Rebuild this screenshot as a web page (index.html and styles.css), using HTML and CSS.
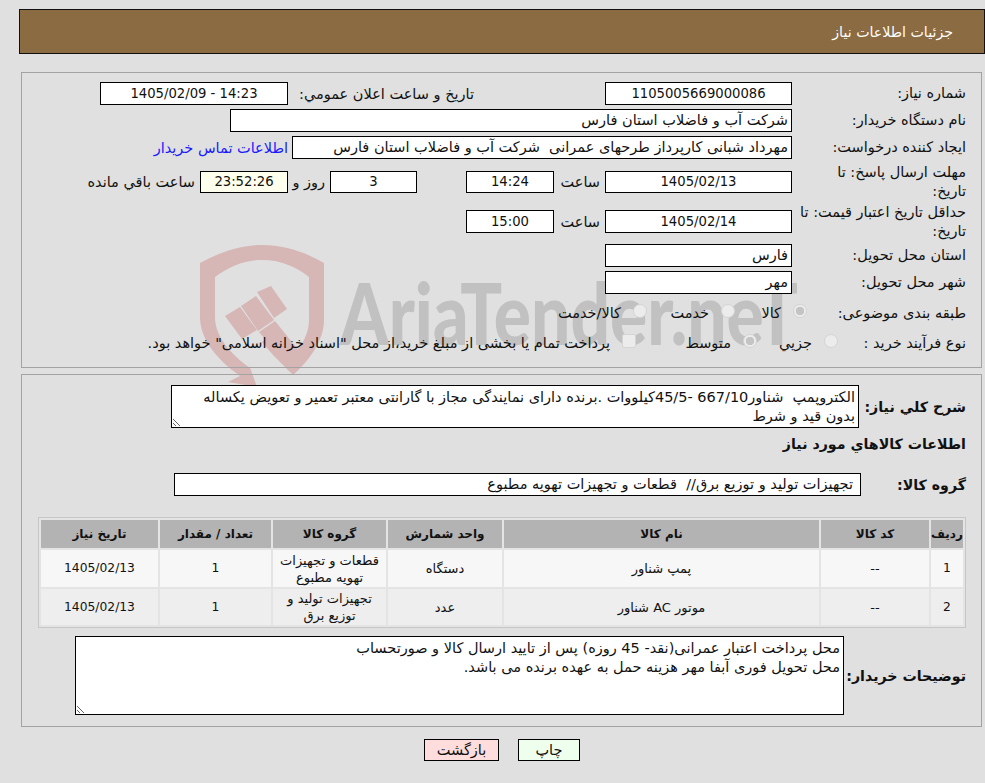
FILE: index.html
```html
<!DOCTYPE html>
<html lang="fa" dir="rtl">
<head>
<meta charset="utf-8">
<title>جزئیات اطلاعات نیاز</title>
<link rel="stylesheet" href="styles.css">
</head>
<body>
<svg class="watermark" width="985" height="783" viewBox="0 0 985 783" aria-hidden="true">
  <path class="wm-red" fill-rule="evenodd" d="M200 263C220 252 240 245 262 245C285 245 305 252 324 263L324 320C324 340 310 360 293 375L273 355L262 342L274 332L293 355C303 345 309 332 309 320L309 277C295 266 280 260 262 260C245 260 230 266 215 277L215 317C215 335 228 352 250 368L248 362L257 387L228 382L240 376C215 358 200 338 200 317Z"/>
  <path class="wm-red" d="M225 316L240 307L257 330L242 339Z"/>
  <path class="wm-red" d="M241 306L256 296L274 320L258 331Z"/>
  <path class="wm-red" d="M257 292L271 286L287 309L274 318Z"/>
  <path class="wm-red" d="M259 332L275 321L300 352L290 368Z"/>
  <text class="wm-text" x="340" y="345" textLength="458" lengthAdjust="spacingAndGlyphs">AriaTender.neT</text>
</svg>

<header class="title-bar"><h1 class="title">جزئیات اطلاعات نیاز</h1></header>

<section class="panel panel-info">
  <div class="row">
    <div class="lbl">شماره نیاز:</div>
    <div class="box w187 center num">1105005669000086</div>
    <div class="lbl-announce">تاریخ و ساعت اعلان عمومي:</div>
    <div class="box w188 center num" dir="ltr">1405/02/09 - 14:23</div>
  </div>
  <div class="row">
    <div class="lbl">نام دستگاه خریدار:</div>
    <div class="box w562">شرکت آب و فاضلاب استان فارس</div>
  </div>
  <div class="row">
    <div class="lbl">ایجاد کننده درخواست:</div>
    <div class="box w500">مهرداد شبانی کارپرداز طرحهای عمرانی&nbsp; شرکت آب و فاضلاب استان فارس</div>
    <a class="contact" href="#">اطلاعات تماس خریدار</a>
  </div>
  <div class="row row-tall first-tall">
    <div class="lbl">مهلت ارسال پاسخ: تا تاریخ:</div>
    <div class="box w187 center short num">1405/02/13</div>
    <div class="hour">ساعت</div>
    <div class="box w88 center short num">14:24</div>
    <div class="box w87 center short days num">3</div>
    <div class="day-word">روز و</div>
    <div class="box w88 center short ivory num">23:52:26</div>
    <div class="left-word">ساعت باقي مانده</div>
  </div>
  <div class="row row-tall second-tall">
    <div class="lbl">حداقل تاریخ اعتبار قیمت: تا تاریخ:</div>
    <div class="box w187 center num">1405/02/14</div>
    <div class="hour">ساعت</div>
    <div class="box w88 center num">15:00</div>
  </div>
  <div class="row">
    <div class="lbl">استان محل تحویل:</div>
    <div class="box w187">فارس</div>
  </div>
  <div class="row">
    <div class="lbl">شهر محل تحویل:</div>
    <div class="box w187">مهر</div>
  </div>
  <div class="row row-options">
    <div class="lbl lbl-subject">طبقه بندی موضوعی:</div>
    <label class="opt w72"><input class="radio" type="radio" name="subject" checked disabled>کالا</label>
    <label class="opt w88o"><input class="radio" type="radio" name="subject" disabled>خدمت</label>
    <label class="opt"><input class="radio" type="radio" name="subject" disabled>کالا/خدمت</label>
  </div>
  <div class="row row-options row-process">
    <div class="lbl lbl-process">نوع فرآیند خرید :</div>
    <label class="opt w81"><input class="radio" type="radio" name="process" disabled>جزیي</label>
    <label class="opt w121"><input class="radio" type="radio" name="process" checked disabled>متوسط</label>
    <label class="opt"><input class="check" type="checkbox" disabled>پرداخت تمام یا بخشی از مبلغ خرید،از محل "اسناد خزانه اسلامی" خواهد بود.</label>
  </div>
</section>

<section class="panel panel-goods">
  <div class="row row-desc">
    <div class="lbl-bold w107">شرح كلي نياز:</div>
    <textarea class="area area-desc" readonly>الکتروپمپ  شناور667/10 -45/5کیلووات .برنده دارای نمایندگی مجاز با گارانتی معتبر تعمیر و تعویض یکساله
بدون قید و شرط</textarea>
  </div>
  <h2 class="goods-title">اطلاعات كالاهاي مورد نياز</h2>
  <div class="row row-group">
    <div class="lbl-bold w105">گروه کالا:</div>
    <div class="box w687 group-box">تجهیزات تولید و توزیع برق//&nbsp; قطعات و تجهیزات تهویه مطبوع</div>
  </div>
  <table class="goods">
    <thead>
      <tr>
        <th class="c-row">ردیف</th><th class="c-code">کد کالا</th><th class="c-name">نام کالا</th><th class="c-unit">واحد شمارش</th><th class="c-group">گروه کالا</th><th class="c-qty">تعداد / مقدار</th><th class="c-date">تاریخ نیاز</th>
      </tr>
    </thead>
    <tbody>
      <tr class="r1">
        <td class="td-num">1</td><td>--</td><td>پمپ شناور</td><td>دستگاه</td><td>قطعات و تجهیزات تهویه مطبوع</td><td class="td-num">1</td><td class="td-num">1405/02/13</td>
      </tr>
      <tr class="r2">
        <td class="td-num">2</td><td>--</td><td>موتور AC شناور</td><td>عدد</td><td>تجهیزات تولید و توزیع برق</td><td class="td-num">1</td><td class="td-num">1405/02/13</td>
      </tr>
    </tbody>
  </table>
  <div class="row row-notes">
    <div class="lbl-bold w122">توضیحات خریدار:</div>
    <textarea class="area area-notes" readonly>محل پرداخت اعتبار عمرانی(نقد- 45 روزه) پس از تایید ارسال کالا و صورتحساب
محل تحویل فوری آبفا مهر هزینه حمل به عهده برنده می باشد.</textarea>
  </div>
</section>

<div class="actions">
  <button class="btn btn-print" type="button">چاپ</button>
  <button class="btn btn-back" type="button">بازگشت</button>
</div>
</body>
</html>
```

FILE: styles.css
```css
* { box-sizing: border-box; }
html { background: #e0e0e0; }
body {
  margin: 0;
  padding: 9px 0 0 19px;
  height: 783px;
  overflow: hidden;
  font-family: "DejaVu Sans", "Liberation Sans", sans-serif;
  font-size: 14.5px;
  color: #111;
}
.watermark { position: absolute; left: 0; top: 0; z-index: -1; direction: ltr; }
.wm-red { fill: #d7b6b6; }
.wm-text { font-family: "Lato", sans-serif; font-weight: 900; font-size: 86px; fill: #c1c1c1; direction: ltr; }

.title-bar {
  height: 45px;
  background: #8b6b41;
  border: 1px solid #111;
  display: flex;
  align-items: center;
  padding-right: 31px;
}
.title { margin: 0; font-size: 14.2px; font-weight: normal; color: #fff; }

.panel {
  width: 961px;
  margin-right: 3px;
  border: 1px solid #a3a3a3;
}
.panel-info { margin-top: 18px; height: 296px; padding: 9px 15px 0 0; }
.panel-goods { margin-top: 6px; height: 353px; padding: 10px 15px 0 0; }

.row { display: flex; align-items: center; margin-bottom: 4px; }
.row-tall { height: 37px; margin-bottom: 3px; }
.first-tall { margin-top: 4px; }
.second-tall { margin-bottom: 4px; }
.lbl { width: 166px; margin-left: 8px; line-height: 19px; flex: none; }
.lbl-announce { width: 312px; padding-right: 131px; flex: none; white-space: nowrap; margin-left: 5px; }

.box {
  height: 23px;
  line-height: 21px;
  background: #fff;
  border: 1px solid #000;
  padding: 0 3px;
  flex: none;
  white-space: nowrap;
  overflow: hidden;
}
.short { height: 22px; line-height: 20px; }
.num { font-size: 13.2px; }
.center { text-align: center; }
.ivory { background: #ffffee; }
.w187 { width: 187px; }
.w188 { width: 188px; }
.w562 { width: 562px; }
.w500 { width: 500px; }
.w88 { width: 88px; }
.w87 { width: 87px; }
.w687 { width: 687px; }

.contact { color: #1a1aff; text-decoration: none; margin-right: 4px; white-space: nowrap; }
.hour { width: 51px; padding-right: 5px; white-space: nowrap; flex: none; }
.days { margin-right: 49px; }
.day-word { width: 42px; padding-right: 5px; white-space: nowrap; flex: none; }
.left-word { margin-right: 5px; white-space: nowrap; }

.row-options { height: 24px; margin-bottom: 6px; margin-top: 7px; }
.row-process { margin-top: 0; }
.lbl-subject { width: 159px; margin-left: 0; }
.lbl-process { width: 128px; margin-left: 0; }
.opt { display: flex; align-items: center; white-space: nowrap; flex: none; }
.w72 { width: 72px; }
.w88o { width: 88px; }
.w81 { width: 81px; }
.w121 { width: 121px; }
.radio, .check {
  appearance: none;
  width: 14px;
  height: 14px;
  margin: -4px 0 0 12px;
  border: 1px solid #d4d4d4;
  background: #ececec;
  flex: none;
}
.radio { border-radius: 50%; }
.check { border-radius: 2px; }
.radio:checked { background: radial-gradient(circle, #c4c4c4 0 4px, #ececec 4.5px); }

.lbl-bold { font-weight: bold; font-size: 14.2px; flex: none; white-space: nowrap; }
.w107 { width: 107px; }
.w105 { width: 105px; }
.w122 { width: 122px; }
.area {
  display: block;
  background: #fff;
  border: 1px solid #000;
  border-radius: 0;
  font: inherit;
  color: inherit;
  line-height: 19px;
  padding: 2px 3px;
  margin: 0;
  outline: none;
  flex: none;
}
.area-desc { width: 688px; height: 43px; }
.area-notes { width: 769px; height: 79px; }
.row-desc { margin-bottom: 6px; }
.goods-title { margin: 0 0 19px; font-size: 14.2px; line-height: 20px; }
.row-group { margin-bottom: 21px; }
.group-box { padding-right: 7px; }

.goods {
  width: 927px;
  table-layout: fixed;
  border: 1px solid #c6c6c6;
  border-spacing: 2px;
  background: #e4e4e4;
  margin-bottom: 8px;
}
.goods th, .goods td { text-align: center; padding: 0; }
.goods th { height: 28px; background: #b3b3b3; font-weight: bold; font-size: 12px; }
.goods td { line-height: 17px; font-size: 13px; }
.goods .td-num { font-size: 12.3px; }
.r1 td { height: 37px; background: #f7f7f7; }
.r2 td { height: 36px; background: #eeeeee; }
.c-row { width: 32px; }
.c-code { width: 108px; }
.c-name { width: 315px; }
.c-unit { width: 114px; }
.c-group { width: 113px; }
.c-qty { width: 111px; }
.c-date { width: 117px; }

.actions { display: flex; justify-content: center; gap: 19px; margin-top: 12px; width: 966px; }
.btn {
  height: 22px;
  border: 1px solid #000;
  border-radius: 0;
  font: inherit;
  color: inherit;
  padding: 0;
  line-height: 20px;
}
.btn-print { width: 62px; background: #eeffee; }
.btn-back { width: 75px; background: #ffdddd; }
```
